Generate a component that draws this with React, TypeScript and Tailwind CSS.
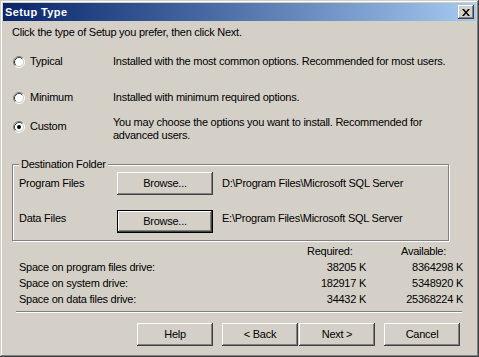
import React from "react";

const font = { fontFamily: '"Liberation Sans", Arial, sans-serif' };

function Radio({ checked }: { checked?: boolean }) {
  return (
    <svg width="12" height="12" viewBox="0 0 12 12" className="shrink-0">
      <circle cx="6" cy="6" r="4.5" fill="#ffffff" />
      <path d="M2.11 9.89 A5.5 5.5 0 0 1 9.89 2.11" stroke="#808080" fill="none" strokeWidth="1" />
      <path d="M9.89 2.11 A5.5 5.5 0 0 1 2.11 9.89" stroke="#ffffff" fill="none" strokeWidth="1" />
      <path d="M2.82 9.18 A4.5 4.5 0 0 1 9.18 2.82" stroke="#404040" fill="none" strokeWidth="1" />
      <path d="M9.18 2.82 A4.5 4.5 0 0 1 2.82 9.18" stroke="#d4d0c8" fill="none" strokeWidth="1" />
      {checked && <circle cx="6" cy="6" r="2" fill="#000000" />}
    </svg>
  );
}

function Btn({ label, def, w }: { label: string; def?: boolean; w: string }) {
  if (def) {
    return (
      <div className={`${w} h-[23px] border border-black flex shrink-0`}>
        <div className="flex-1 flex items-center justify-center bg-[#d4d0c8] shadow-[inset_-1px_-1px_#404040,inset_1px_1px_#ffffff,inset_-2px_-2px_#808080]">
          {label}
        </div>
      </div>
    );
  }
  return (
    <div
      className={`${w} h-[23px] shrink-0 flex items-center justify-center bg-[#d4d0c8] shadow-[inset_-1px_-1px_#404040,inset_1px_1px_#ffffff,inset_-2px_-2px_#808080,inset_2px_2px_#d4d0c8]`}
    >
      {label}
    </div>
  );
}

export default function App() {
  return (
    <div
      style={font}
      className="w-[479px] h-[357px] bg-[#d4d0c8] text-black text-[11px] leading-[13px] tracking-[-0.25px] whitespace-nowrap p-[3px] flex flex-col shadow-[inset_-1px_-1px_#404040,inset_1px_1px_#d4d0c8,inset_-2px_-2px_#808080,inset_2px_2px_#ffffff] overflow-hidden"
    >
      {/* Title bar */}
      <div className="h-[18px] shrink-0 flex items-start justify-between bg-gradient-to-r from-[#0a246a] to-[#a6caf0]">
        <div className="pl-[2px] h-[18px] flex items-center text-white font-bold text-[11px] tracking-[0.4px]">Setup Type</div>
        <div className="mt-[2px] mr-[2px] w-[16px] h-[14px] flex items-center justify-center bg-[#d4d0c8] shadow-[inset_-1px_-1px_#404040,inset_1px_1px_#ffffff,inset_-2px_-2px_#808080]">
          <svg width="8" height="7" viewBox="0 0 8 7">
            <path d="M0 0h2l2 2.5L6 0h2L5 3.5 8 7H6L4 4.5 2 7H0l3-3.5z" fill="#000" />
          </svg>
        </div>
      </div>

      {/* Content */}
      <div className="pl-[9px] flex flex-col">
        <div className="mt-[5px] h-[13px]">Click the type of Setup you prefer, then click Next.</div>

        <div className="mt-[16px] h-[13px] flex items-center">
          <div className="w-[101px] shrink-0 flex items-center">
            <div className="ml-[1px]"><Radio /></div>
            <span className="ml-[5px]">Typical</span>
          </div>
          <span>Installed with the most common options. Recommended for most users.</span>
        </div>

        <div className="mt-[23px] h-[13px] flex items-center">
          <div className="w-[101px] shrink-0 flex items-center">
            <div className="ml-[1px]"><Radio /></div>
            <span className="ml-[5px]">Minimum</span>
          </div>
          <span>Installed with minimum required options.</span>
        </div>

        <div className="mt-[12px] flex items-start">
          <div className="w-[101px] shrink-0 mt-[4px] h-[13px] flex items-center">
            <div className="ml-[1px]"><Radio checked /></div>
            <span className="ml-[5px]">Custom</span>
          </div>
          <div>
            <div className="h-[13px]">You may choose the options you want to install. Recommended for</div>
            <div className="h-[13px]">advanced users.</div>
          </div>
        </div>

        {/* Group box */}
        <div className="mt-[22px] w-[437px] h-[77px] border border-[#808080] shadow-[inset_1px_1px_#ffffff,1px_1px_#ffffff] flex flex-col pb-[7px]">
          <span className="-mt-[7px] ml-[6px] px-[2px] w-fit h-[13px] bg-[#d4d0c8]">Destination Folder</span>
          <div className="mt-[1px] h-[23px] flex items-center pl-[6px]">
            <span className="w-[98px] shrink-0">Program Files</span>
            <Btn label="Browse..." w="w-[96px]" />
            <span className="ml-[9px]">D:\Program Files\Microsoft SQL Server</span>
          </div>
          <div className="mt-[15px] h-[23px] flex items-start pl-[6px]">
            <span className="w-[98px] shrink-0 mt-[2px]">Data Files</span>
            <Btn label="Browse..." def w="w-[96px]" />
            <span className="ml-[9px] mt-[2px]">E:\Program Files\Microsoft SQL Server</span>
          </div>
        </div>

        {/* Space */}
        <div className="mt-[3px] h-[15px] flex items-center">
          <div className="w-[288px] shrink-0" />
          <div className="w-[66px] shrink-0 pl-[7px]">Required:</div>
          <div className="w-[97px] shrink-0 pl-[35px]">Available:</div>
        </div>
        {[
          ["Space on program files drive:", "38205 K", "8364298 K"],
          ["Space on system drive:", "182917 K", "5348920 K"],
          ["Space on data files drive:", "34432 K", "25368224 K"],
        ].map((r) => (
          <div key={r[0]} className="h-[16px] flex items-center pl-[7px]">
            <div className="w-[281px] shrink-0">{r[0]}</div>
            <div className="w-[66px] shrink-0 text-right">{r[1]}</div>
            <div className="w-[97px] shrink-0 text-right">{r[2]}</div>
          </div>
        ))}

        <div className="mt-[4px] ml-[4px] w-[446px] h-[2px] border-t border-t-[#808080] border-b border-b-[#ffffff]" />

        <div className="mt-[10px] flex">
          <div className="ml-[125px]"><Btn label="Help" w="w-[76px]" /></div>
          <div className="ml-[9px]"><Btn label="< Back" w="w-[76px]" /></div>
          <div className="ml-[1px]"><Btn label="Next >" w="w-[76px]" /></div>
          <div className="ml-[9px]"><Btn label="Cancel" w="w-[76px]" /></div>
        </div>
      </div>
    </div>
  );
}
